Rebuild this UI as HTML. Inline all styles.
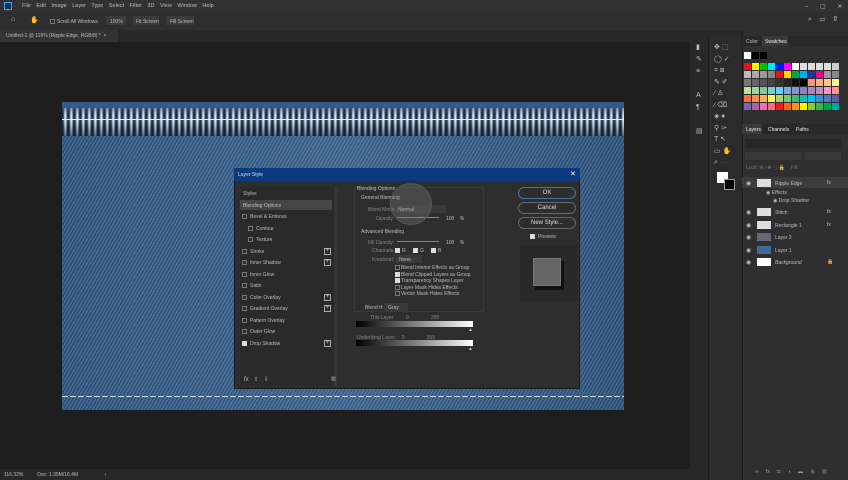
<!DOCTYPE html><html><head><meta charset="utf-8"><style>
*{margin:0;padding:0;box-sizing:border-box}
body{width:848px;height:480px;overflow:hidden;background:#1e1e1e;font-family:"Liberation Sans",sans-serif;color:#c8c8c8;position:relative}
.a{position:absolute}
.t{position:absolute;font-size:5px;white-space:nowrap;color:#bdbdbd}
.cb{position:absolute;width:5px;height:5px;border:1px solid #777;background:#2a2a2a}
.ck{position:absolute;width:5px;height:5px;background:#ddd}
.pl{position:absolute;width:7px;height:7px;border:1px solid #aaa;font-size:6px;line-height:5px;text-align:center;color:#ccc}
.btn{position:absolute;left:518px;width:58px;height:12px;border:1px solid #666;border-radius:6px;font-size:6px;text-align:center;line-height:10px;color:#ddd}
.sw{position:absolute;width:7px;height:7px}
.eye{position:absolute;left:746px;font-size:6px;color:#bbb}
.th{position:absolute;left:757px;width:14px;height:8px;background:#ddd}
</style></head><body>
<div class="a" style="left:0;top:0;width:848px;height:12px;background:#323232"></div>
<div class="a" style="left:4px;top:2px;width:8px;height:8px;background:#0f2d4d;border:1px solid #31a8ff"></div>
<div class="t" style="left:22px;top:3px;font-size:5.5px;word-spacing:4px">File Edit Image Layer Type Select Filter 3D View Window Help</div>
<div class="t" style="left:805px;top:3px;font-size:6px;word-spacing:10px">– ▢ ✕</div>
<div class="a" style="left:0;top:12px;width:848px;height:18px;background:#2f2f2f"></div>
<div class="t" style="left:11px;top:16px;font-size:7px">⌂</div>
<div class="t" style="left:30px;top:16px;font-size:7px">✋</div>
<div class="cb" style="left:50px;top:19px"></div>
<div class="t" style="left:57px;top:19px">Scroll All Windows</div>
<div class="a" style="left:106px;top:16px;width:20px;height:9px;background:#3b3b3b"></div><div class="t" style="left:110px;top:19px">100%</div>
<div class="a" style="left:133px;top:16px;width:26px;height:9px;background:#3b3b3b"></div><div class="t" style="left:136px;top:19px">Fit Screen</div>
<div class="a" style="left:166px;top:16px;width:28px;height:9px;background:#3b3b3b"></div><div class="t" style="left:170px;top:19px">Fill Screen</div>
<div class="t" style="left:808px;top:16px;font-size:7px;word-spacing:6px">⌕ ▭ ⇧</div>
<div class="a" style="left:0;top:30px;width:690px;height:12px;background:#282828"></div>
<div class="a" style="left:0;top:30px;width:118px;height:12px;background:#333"></div>
<div class="t" style="left:6px;top:33px">Untitled-1 @ 116% (Ripple Edge, RGB/8) *&nbsp;&nbsp;×</div>
<!-- image -->
<div class="a" style="left:62px;top:102px;width:562px;height:308px;background:#36618f;background-image:repeating-linear-gradient(120deg,rgba(255,255,255,.12) 0 1px,rgba(0,0,0,.15) 1px 2px,transparent 2px 3px),linear-gradient(90deg,rgba(0,0,0,.08),rgba(255,255,255,.05),rgba(0,0,0,.1))"></div>
<div class="a" style="left:62px;top:102px;width:562px;height:7px;background:#34598a"></div>
<div class="a" style="left:62px;top:108px;width:562px;height:28px;background:repeating-linear-gradient(90deg,#16263a 0 1.5px,#6d86a0 1.5px 2.5px,#d8dfe7 2.5px 4px,#7890a8 4px 5px,#253a52 5px 6px)"></div>
<div class="a" style="left:62px;top:108px;width:562px;height:28px;background:linear-gradient(180deg,rgba(60,90,130,.5) 0,rgba(255,255,255,0) 25%,rgba(255,255,255,.1) 45%,rgba(0,0,0,.15) 65%,rgba(10,25,45,.6) 100%)"></div>
<div class="a" style="left:62px;top:119px;width:562px;height:1px;background:#e8e8e8"></div>
<div class="a" style="left:62px;top:396px;width:562px;height:1px;background:repeating-linear-gradient(90deg,#d0d8e0 0 6px,transparent 6px 8px)"></div>
<!-- dialog -->
<div class="a" style="left:234px;top:168px;width:346px;height:221px;background:#2e2e2e;border:1px solid #1a1a1a"></div>
<div class="a" style="left:234px;top:168px;width:346px;height:13px;background:#0b3a7e"></div>
<div class="t" style="left:238px;top:172px;color:#ddd">Layer Style</div>
<div class="t" style="left:570px;top:170px;font-size:7px;color:#fff">✕</div>
<div class="a" style="left:240px;top:186px;width:94px;height:200px;background:#2a2a2a"></div>
<div class="a" style="left:334px;top:186px;width:4px;height:200px;background:#353535"></div>
<div class="a" style="left:240px;top:200px;width:92px;height:10px;background:#454545"></div>
<div class="t" style="left:243px;top:191px">Styles</div>
<div class="t" style="left:243px;top:203px">Blending Options</div>
<div class="cb" style="left:242px;top:214px"></div><div class="t" style="left:250px;top:214px">Bevel &amp; Emboss</div>
<div class="cb" style="left:248px;top:226px"></div><div class="t" style="left:256px;top:226px">Contour</div>
<div class="cb" style="left:248px;top:237px"></div><div class="t" style="left:256px;top:237px">Texture</div>
<div class="cb" style="left:242px;top:249px"></div><div class="t" style="left:250px;top:249px">Stroke</div><div class="pl" style="left:324px;top:248px">+</div>
<div class="cb" style="left:242px;top:260px"></div><div class="t" style="left:250px;top:260px">Inner Shadow</div><div class="pl" style="left:324px;top:259px">+</div>
<div class="cb" style="left:242px;top:272px"></div><div class="t" style="left:250px;top:272px">Inner Glow</div>
<div class="cb" style="left:242px;top:283px"></div><div class="t" style="left:250px;top:283px">Satin</div>
<div class="cb" style="left:242px;top:295px"></div><div class="t" style="left:250px;top:295px">Color Overlay</div><div class="pl" style="left:324px;top:294px">+</div>
<div class="cb" style="left:242px;top:306px"></div><div class="t" style="left:250px;top:306px">Gradient Overlay</div><div class="pl" style="left:324px;top:305px">+</div>
<div class="cb" style="left:242px;top:318px"></div><div class="t" style="left:250px;top:318px">Pattern Overlay</div>
<div class="cb" style="left:242px;top:329px"></div><div class="t" style="left:250px;top:329px">Outer Glow</div>
<div class="ck" style="left:242px;top:341px"></div><div class="t" style="left:250px;top:341px">Drop Shadow</div><div class="pl" style="left:324px;top:340px">+</div>
<div class="t" style="left:244px;top:376px;font-size:6px">fx&nbsp;&nbsp;&nbsp;⇧&nbsp;&nbsp;&nbsp;⇩</div>
<div class="t" style="left:331px;top:376px">▥</div>
<div class="a" style="left:354px;top:187px;width:130px;height:125px;border:1px solid #3a3a3a"></div>
<div class="t" style="left:357px;top:186px">Blending Options</div>
<div class="t" style="left:361px;top:195px">General Blending</div>
<div class="t" style="left:368px;top:207px;color:#888">Blend Mode:</div>
<div class="a" style="left:396px;top:205px;width:50px;height:8px;background:#3a3a3a"></div><div class="t" style="left:398px;top:207px">Normal</div>
<div class="t" style="left:376px;top:216px;color:#888">Opacity:</div>
<div class="a" style="left:397px;top:217px;width:42px;height:1px;background:#888"></div>
<div class="t" style="left:446px;top:216px">100&nbsp;&nbsp;&nbsp;&nbsp;%</div>
<div class="t" style="left:361px;top:229px">Advanced Blending</div>
<div class="t" style="left:368px;top:240px;color:#888">Fill Opacity:</div>
<div class="a" style="left:397px;top:241px;width:42px;height:1px;background:#888"></div>
<div class="t" style="left:446px;top:240px">100&nbsp;&nbsp;&nbsp;&nbsp;%</div>
<div class="t" style="left:372px;top:248px;color:#888">Channels:</div>
<div class="ck" style="left:395px;top:248px"></div><div class="t" style="left:402px;top:248px">R</div>
<div class="ck" style="left:413px;top:248px"></div><div class="t" style="left:420px;top:248px">G</div>
<div class="ck" style="left:431px;top:248px"></div><div class="t" style="left:438px;top:248px">B</div>
<div class="t" style="left:372px;top:257px;color:#888">Knockout:</div>
<div class="a" style="left:396px;top:255px;width:26px;height:8px;background:#3a3a3a"></div><div class="t" style="left:399px;top:257px">None</div>
<div class="cb" style="left:395px;top:265px"></div><div class="t" style="left:401px;top:265px">Blend Interior Effects as Group</div>
<div class="ck" style="left:395px;top:272px"></div><div class="t" style="left:401px;top:272px">Blend Clipped Layers as Group</div>
<div class="ck" style="left:395px;top:278px"></div><div class="t" style="left:401px;top:278px">Transparency Shapes Layer</div>
<div class="cb" style="left:395px;top:285px"></div><div class="t" style="left:401px;top:285px">Layer Mask Hides Effects</div>
<div class="cb" style="left:395px;top:291px"></div><div class="t" style="left:401px;top:291px">Vector Mask Hides Effects</div>
<div class="t" style="left:365px;top:305px">Blend If:</div>
<div class="a" style="left:384px;top:303px;width:24px;height:8px;background:#3a3a3a"></div><div class="t" style="left:388px;top:305px">Gray</div>
<div class="t" style="left:370px;top:315px;color:#888">This Layer:&nbsp;&nbsp;&nbsp;&nbsp;&nbsp;&nbsp;&nbsp;&nbsp;0&nbsp;&nbsp;&nbsp;&nbsp;&nbsp;&nbsp;&nbsp;&nbsp;&nbsp;&nbsp;&nbsp;&nbsp;&nbsp;&nbsp;&nbsp;&nbsp;255</div>
<div class="a" style="left:356px;top:321px;width:117px;height:6px;background:linear-gradient(90deg,#000,#fff)"></div>
<div class="t" style="left:468px;top:327px">▲</div>
<div class="t" style="left:357px;top:335px;color:#888">Underlying Layer:&nbsp;&nbsp;&nbsp;&nbsp;0&nbsp;&nbsp;&nbsp;&nbsp;&nbsp;&nbsp;&nbsp;&nbsp;&nbsp;&nbsp;&nbsp;&nbsp;&nbsp;&nbsp;&nbsp;&nbsp;255</div>
<div class="a" style="left:356px;top:340px;width:117px;height:6px;background:linear-gradient(90deg,#000,#fff)"></div>
<div class="t" style="left:468px;top:346px">▲</div>
<div class="a" style="left:390px;top:183px;width:42px;height:42px;border-radius:50%;background:rgba(120,120,120,.35);border:1px solid #555"></div>
<div class="btn" style="top:187px;border-color:#4a6fa8">OK</div>
<div class="btn" style="top:202px">Cancel</div>
<div class="btn" style="top:217px">New Style...</div>
<div class="ck" style="left:530px;top:234px"></div><div class="t" style="left:538px;top:234px">Preview</div>
<div class="a" style="left:520px;top:245px;width:58px;height:57px;background:#292929"></div>
<div class="a" style="left:535px;top:261px;width:29px;height:29px;background:#111"></div>
<div class="a" style="left:533px;top:258px;width:28px;height:28px;background:#666;border:1px solid #777"></div>
<div class="a" style="left:0;top:469px;width:690px;height:11px;background:#282828"></div>
<div class="t" style="left:4px;top:472px">116.32%&nbsp;&nbsp;&nbsp;&nbsp;&nbsp;&nbsp;&nbsp;&nbsp;&nbsp;&nbsp;Doc: 1.39M/16.4M&nbsp;&nbsp;&nbsp;&nbsp;&nbsp;&nbsp;&nbsp;&nbsp;&nbsp;&nbsp;&nbsp;&nbsp;&nbsp;&nbsp;&nbsp;&nbsp;&nbsp;&nbsp;&nbsp;›</div>
<div class="a" style="left:690px;top:30px;width:52px;height:450px;background:#282828"></div>
<div class="a" style="left:708px;top:36px;width:32px;height:444px;background:#2b2b2b;border-left:1px solid #1c1c1c"></div>
<div class="t" style="left:696px;top:42px;font-size:7px;line-height:12px">▮<br>✎<br>≡<br><br>A<br>¶<br><br>▤</div>
<div class="t" style="left:714px;top:42px;font-size:7px;line-height:11.5px">✥ ⬚<br>◯ ✓<br>⌗ ⊠<br>✎ ✐<br>∕ ♙<br>∕ ⌫<br>◈ ♦<br>⚲ ✑<br>T ↖<br>▭ ✋<br>⌕ ⋯</div>
<div class="a" style="left:717px;top:172px;width:11px;height:11px;background:#fff"></div>
<div class="a" style="left:724px;top:179px;width:11px;height:11px;background:#000;border:1px solid #999"></div>
<div class="a" style="left:742px;top:30px;width:106px;height:450px;background:#2f2f2f;border-left:1px solid #1c1c1c"></div>
<div class="a" style="left:742px;top:36px;width:106px;height:10px;background:#282828"></div>
<div class="a" style="left:762px;top:36px;width:26px;height:10px;background:#3a3a3a"></div>
<div class="t" style="left:746px;top:39px">Color</div><div class="t" style="left:765px;top:39px;color:#eee">Swatches</div>
<div class="sw" style="left:744px;top:52px;background:#fff"></div><div class="sw" style="left:752px;top:52px;background:#000"></div><div class="sw" style="left:760px;top:52px;background:#000"></div>
<div id="sws"></div>
<div class="a" style="left:742px;top:124px;width:106px;height:10px;background:#282828"></div>
<div class="a" style="left:742px;top:124px;width:20px;height:10px;background:#3a3a3a"></div>
<div class="t" style="left:746px;top:127px;color:#eee">Layers&nbsp;&nbsp;&nbsp;&nbsp;&nbsp;Channels&nbsp;&nbsp;&nbsp;&nbsp;&nbsp;Paths</div>
<div class="a" style="left:745px;top:139px;width:96px;height:9px;background:#262626"></div>
<div class="a" style="left:745px;top:152px;width:56px;height:8px;background:#383838"></div>
<div class="a" style="left:805px;top:152px;width:36px;height:8px;background:#383838"></div>
<div class="t" style="left:746px;top:165px;color:#777">Lock: ⊞ ∕ ✥ ⬚ 🔒&nbsp;&nbsp;&nbsp;&nbsp;Fill:</div>
<div class="a" style="left:742px;top:177px;width:106px;height:11px;background:#3c3c3c"></div>
<div class="eye" style="top:180px">◉</div><div class="th" style="top:179px"></div><div class="t" style="left:775px;top:181px">Ripple Edge</div><div class="t" style="left:827px;top:180px">fx</div>
<div class="t" style="left:766px;top:190px">◉ Effects</div>
<div class="t" style="left:773px;top:198px">◉ Drop Shadow</div>
<div class="eye" style="top:209px">◉</div><div class="th" style="top:208px"></div><div class="t" style="left:775px;top:210px">Stitch</div><div class="t" style="left:827px;top:209px">fx</div>
<div class="eye" style="top:222px">◉</div><div class="th" style="top:221px"></div><div class="t" style="left:775px;top:223px">Rectangle 1</div><div class="t" style="left:827px;top:222px">fx</div>
<div class="eye" style="top:234px">◉</div><div class="th" style="top:233px;background:#667"></div><div class="t" style="left:775px;top:235px">Layer 2</div>
<div class="eye" style="top:247px">◉</div><div class="th" style="top:246px;background:#3e6c9b"></div><div class="t" style="left:775px;top:248px">Layer 1</div>
<div class="eye" style="top:259px">◉</div><div class="th" style="top:258px;background:#fff"></div><div class="t" style="left:775px;top:260px;font-style:italic">Background</div><div class="t" style="left:827px;top:259px">🔒</div>
<div class="t" style="left:755px;top:469px;color:#999;word-spacing:6px">∞ fx ◘ ◑ ▬ ⊞ ▥</div>
<script>
var c=[["#e8141b","#fff200","#00c400","#00e5ff","#0018f0","#ff00ff","#fff","#ddd","#ddd","#ddd","#ddd","#ccc"],
["#bbb","#aaa","#999","#888","#e8141b","#ffd200","#00a651","#00aeef","#2e3192","#ec008c","#999","#888"],
["#777","#666","#555","#444","#333","#222","#111","#000","#f7977a","#f9ad81","#fdc68a","#fff79a"],
["#c4df9b","#a3d39c","#82ca9c","#7bcdc8","#6ecff6","#7ea7d8","#8493ca","#8882be","#a187be","#bc8dbf","#f49ac2","#f6989d"],
["#f26c4f","#f68e55","#fbaf5c","#fff467","#acd372","#7cc576","#3bb878","#1abbb4","#00bff3","#438ccb","#5574b9","#605ca8"],
["#855fa8","#a763a8","#f06eaa","#f26d7d","#ed1c24","#f26522","#f7941d","#fff200","#8dc63f","#39b54a","#00a651","#00a99d"]];
var h="";for(var r=0;r<6;r++)for(var i=0;i<12;i++)h+='<div class="sw" style="left:'+(744+i*8)+'px;top:'+(63+r*8)+'px;background:'+c[r][i]+'"></div>';
document.getElementById("sws").innerHTML=h;
</script>
</body></html>
